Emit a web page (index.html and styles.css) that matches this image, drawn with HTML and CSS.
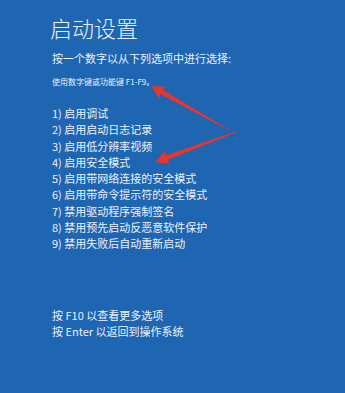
FILE: index.html
```html
<!DOCTYPE html>
<html lang="zh-CN">
<head>
<meta charset="utf-8">
<title>启动设置</title>
<link rel="stylesheet" href="styles.css">
</head>
<body>
<main class="screen">
  <h1 class="title">启动设置</h1>
  <p class="prompt">按一个数字以从下列选项中进行选择:</p>
  <p class="hint">使用数字键或功能键 F1-F9。</p>
  <ol class="options">
    <li>1) 启用调试</li>
    <li>2) 启用启动日志记录</li>
    <li>3) 启用低分辨率视频</li>
    <li>4) 启用安全模式</li>
    <li>5) 启用带网络连接的安全模式</li>
    <li>6) 启用带命令提示符的安全模式</li>
    <li>7) 禁用驱动程序强制签名</li>
    <li>8) 禁用预先启动反恶意软件保护</li>
    <li>9) 禁用失败后自动重新启动</li>
  </ol>
  <div class="footer">
    <p>按 F10 以查看更多选项</p>
    <p>按 Enter 以返回到操作系统</p>
  </div>
  <svg class="annotations" width="345" height="393" viewBox="0 0 345 393" aria-hidden="true">
    <polygon fill="#e8352d" points="151,86 166.6,86.8 162.7,89.7 229.2,129.7 228.8,130.3 160.3,94.1 159.8,99"/>
    <polygon fill="#e8352d" points="155,162 165.7,150.5 165.4,155.5 235.9,131.6 236.1,132.4 167.1,160.1 170.5,163.7"/>
  </svg>
</main>
</body>
</html>
```

FILE: styles.css
```css
html, body {
  margin: 0;
  padding: 0;
  background: #1e65b2;
}

.screen {
  position: relative;
  width: 345px;
  height: 393px;
  box-sizing: border-box;
  padding: 14px 0 0 52px;
  overflow: hidden;
  color: #edf2fa;
  font-family: "Noto Sans CJK SC", "Noto Sans", sans-serif;
}

.title {
  margin: 0;
  font-size: 22px;
  line-height: 26px;
  font-weight: 300;
  margin-left: -2px;
}

.prompt {
  margin: 10px 0 0;
  font-size: 11px;
  line-height: 16px;
}

.hint {
  margin: 10px 0 0;
  font-size: 8px;
  line-height: 12px;
}

.options {
  list-style: none;
  margin: 17px 0 0;
  padding: 0;
  font-size: 11px;
  line-height: 16.25px;
}

.footer {
  margin-top: 56px;
  font-size: 11px;
  line-height: 16px;
}

.footer p {
  margin: 0;
}

.annotations {
  position: absolute;
  top: 0;
  left: 0;
  pointer-events: none;
}
```
